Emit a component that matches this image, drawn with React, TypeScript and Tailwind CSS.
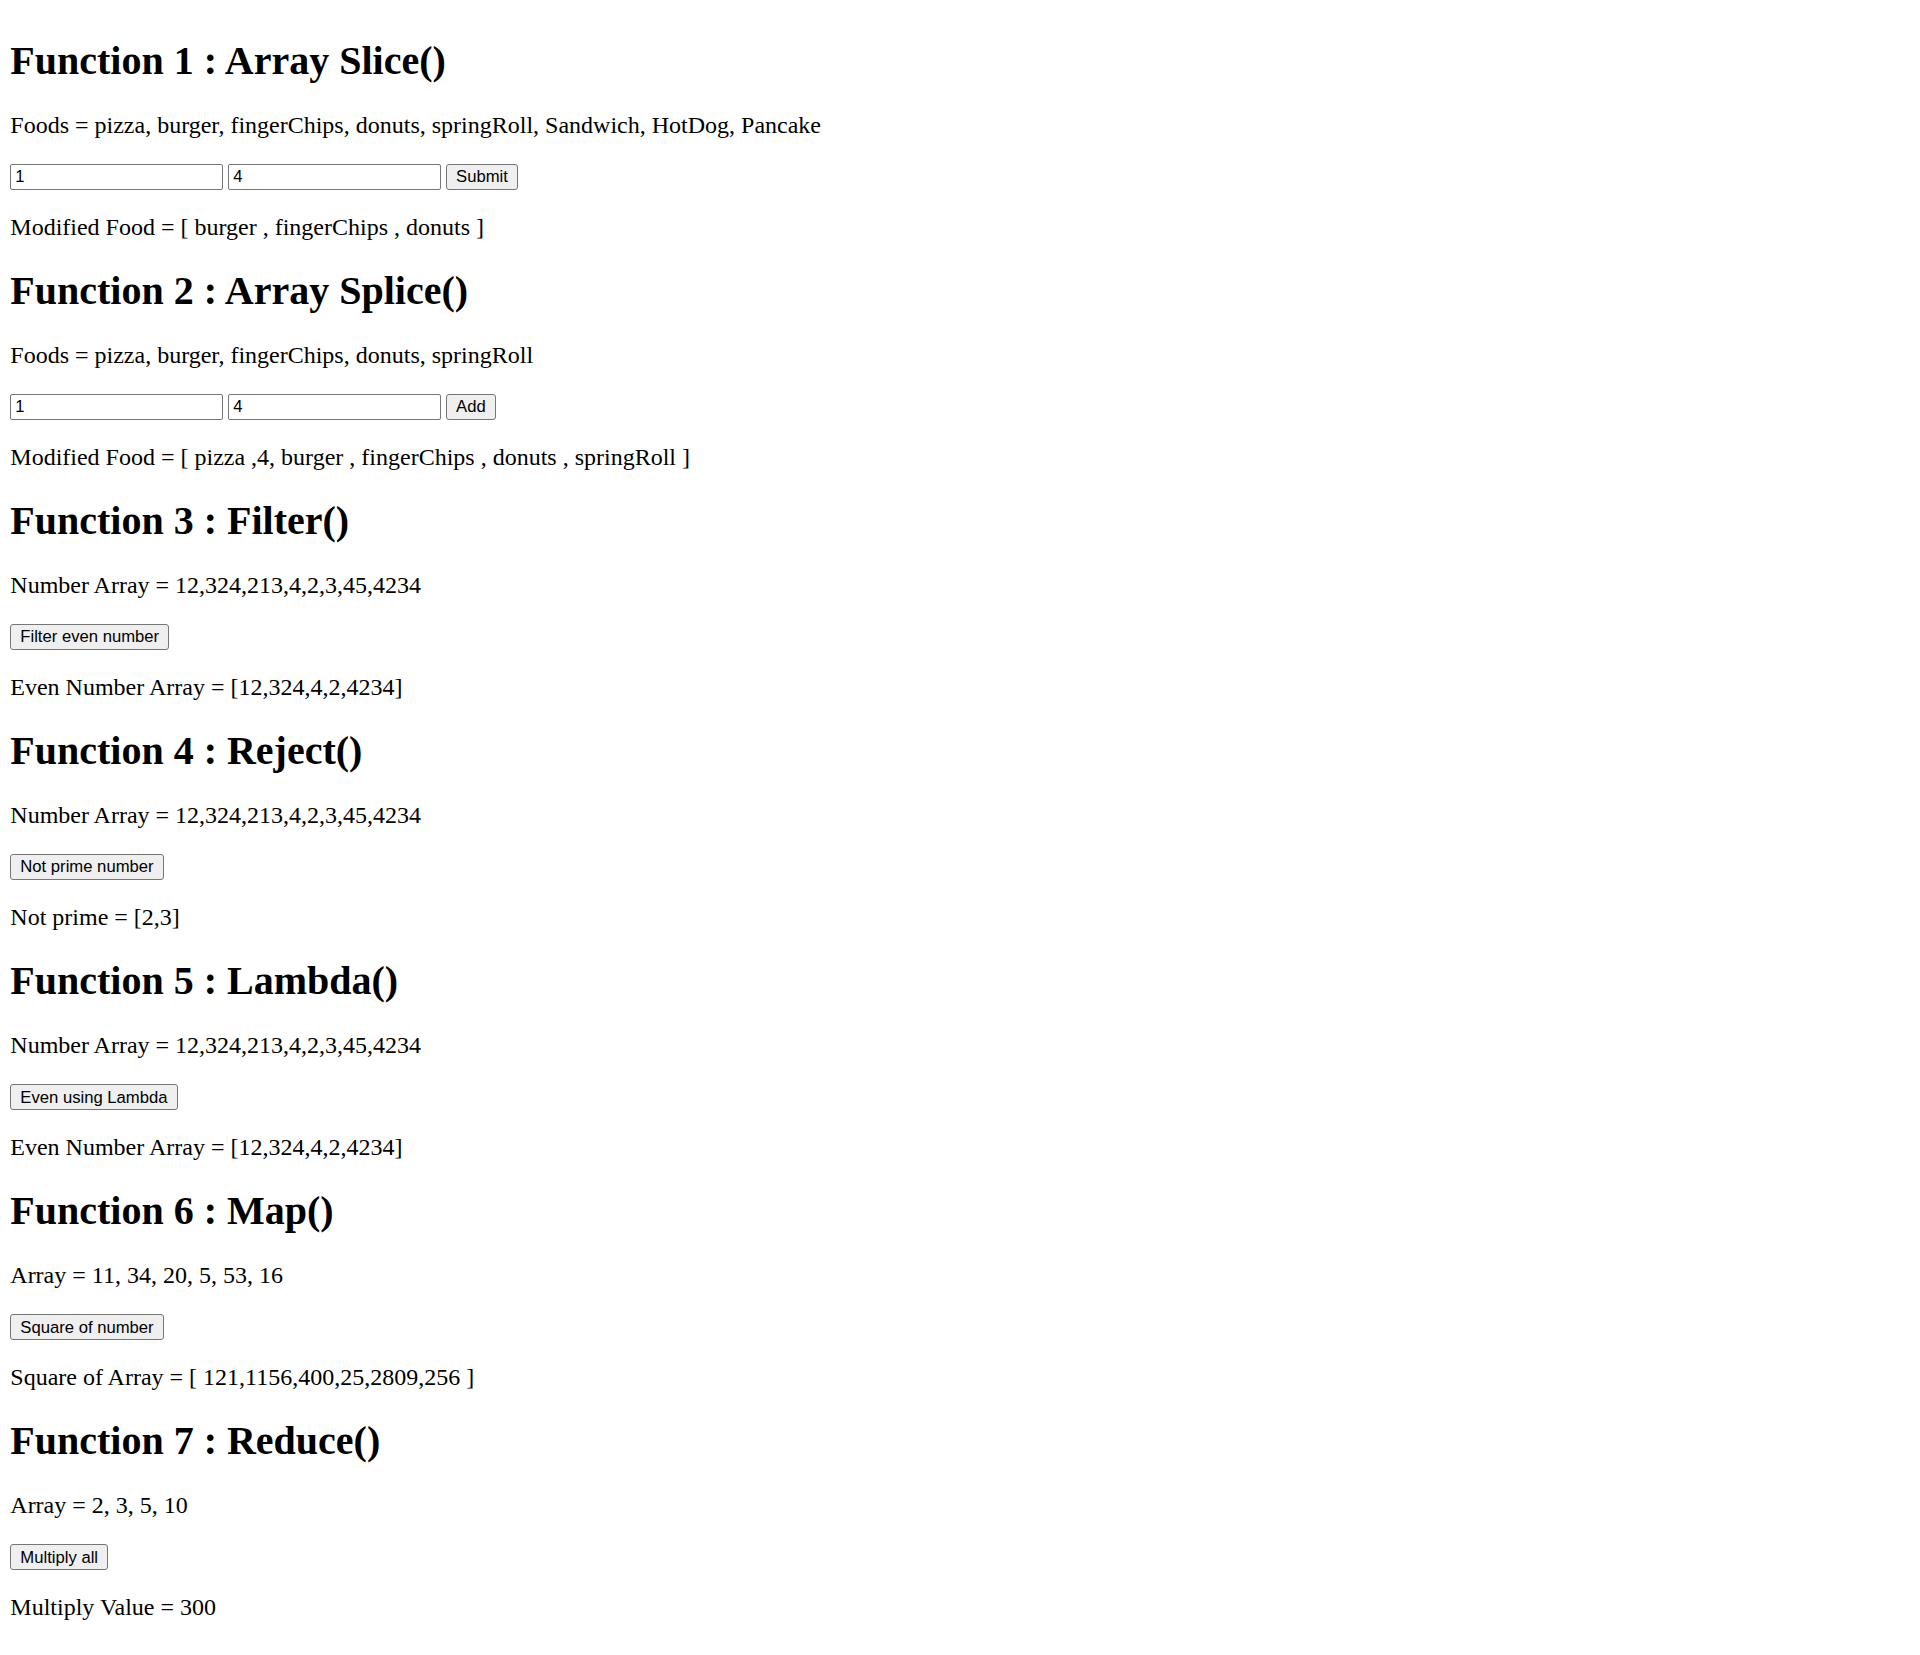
import React from 'react'

const serif = "font-['Liberation_Serif','Times_New_Roman',serif]"
const sans = "font-['Liberation_Sans',Arial,sans-serif]"

const numbers = [12, 324, 213, 4, 2, 3, 45, 4234]

interface SectionProps {
  title: string
  source: string
  result: string
  children: React.ReactNode
}

function Section({ title, source, result, children }: SectionProps) {
  return (
    <section className="flex flex-col mb-[27px]">
      <h1 className={`${serif} text-[40px] leading-[46px] font-bold h-[46px] whitespace-nowrap`}>
        {title}
      </h1>
      <h3 className={`${serif} mt-[27.5px] text-[24px] leading-[28px] h-[28px] whitespace-nowrap`}>
        {source}
      </h3>
      <div className="mt-[24.5px] flex items-center gap-[5.5px] h-[26.4px]">{children}</div>
      <h3 className={`${serif} mt-[22.7px] text-[24px] leading-[28px] h-[28px] whitespace-nowrap`}>
        {result}
      </h3>
    </section>
  )
}

function Btn({ label }: { label: string }) {
  return (
    <button
      type="button"
      className={`${sans} h-[26.4px] px-[9px] text-[16.67px] leading-[19px] text-black bg-[#efefef] border border-[#767676] rounded-[3px] whitespace-nowrap`}
    >
      {label}
    </button>
  )
}

function Field({ value }: { value: string }) {
  return (
    <input
      type="text"
      defaultValue={value}
      className={`${sans} w-[212.4px] h-[26.4px] pl-[4px] text-[16.67px] text-black bg-white border border-[#767676] rounded-[2px] outline-none`}
    />
  )
}

export default function App() {
  return (
    <div className="min-h-[1655px] bg-white text-black pl-[10.3px] pt-[37.5px]">
      <Section
        title="Function 1 : Array Slice()"
        source="Foods = pizza, burger, fingerChips, donuts, springRoll, Sandwich, HotDog, Pancake"
        result="Modified Food = [ burger , fingerChips , donuts ]"
      >
        <Field value="1" />
        <Field value="4" />
        <Btn label="Submit" />
      </Section>

      <Section
        title="Function 2 : Array Splice()"
        source="Foods = pizza, burger, fingerChips, donuts, springRoll"
        result="Modified Food = [ pizza ,4, burger , fingerChips , donuts , springRoll ]"
      >
        <Field value="1" />
        <Field value="4" />
        <Btn label="Add" />
      </Section>

      <Section
        title="Function 3 : Filter()"
        source={`Number Array = ${numbers.join(',')}`}
        result="Even Number Array = [12,324,4,2,4234]"
      >
        <Btn label="Filter even number" />
      </Section>

      <Section
        title="Function 4 : Reject()"
        source={`Number Array = ${numbers.join(',')}`}
        result="Not prime = [2,3]"
      >
        <Btn label="Not prime number" />
      </Section>

      <Section
        title="Function 5 : Lambda()"
        source={`Number Array = ${numbers.join(',')}`}
        result="Even Number Array = [12,324,4,2,4234]"
      >
        <Btn label="Even using Lambda" />
      </Section>

      <Section
        title="Function 6 : Map()"
        source="Array = 11, 34, 20, 5, 53, 16"
        result="Square of Array = [ 121,1156,400,25,2809,256 ]"
      >
        <Btn label="Square of number" />
      </Section>

      <Section
        title="Function 7 : Reduce()"
        source="Array = 2, 3, 5, 10"
        result="Multiply Value = 300"
      >
        <Btn label="Multiply all" />
      </Section>
    </div>
  )
}
